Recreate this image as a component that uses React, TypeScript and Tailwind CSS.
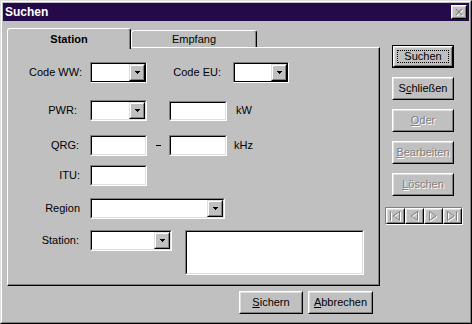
import type { ReactNode } from "react";

function Raised({ className = "", children }: { className?: string; children?: ReactNode }) {
  return (
    <div className={`border border-t-white border-l-white border-r-black border-b-black bg-[#c0c0c0] ${className}`}>
      <div className="w-full h-full border border-t-[#dfdfdf] border-l-[#dfdfdf] border-r-[#808080] border-b-[#808080] flex items-center justify-center">
        {children}
      </div>
    </div>
  );
}

function Sunken({
  className = "",
  inner = "border-t-black border-l-black border-r-[#dfdfdf] border-b-[#dfdfdf]",
  children,
}: {
  className?: string;
  inner?: string;
  children?: ReactNode;
}) {
  return (
    <div className={`border border-t-[#808080] border-l-[#808080] border-r-white border-b-white ${className}`}>
      <div className={`w-full h-full border bg-white flex justify-end ${inner}`}>{children}</div>
    </div>
  );
}

function Arrow() {
  return (
    <div className="w-[16px] h-full border border-t-[#dfdfdf] border-l-[#dfdfdf] border-r-black border-b-black bg-[#c0c0c0]">
      <div className="w-full h-full border border-t-white border-l-white border-r-[#808080] border-b-[#808080] flex items-center justify-center">
        <svg width="5" height="3" viewBox="0 0 5 3" shapeRendering="crispEdges">
          <path d="M0 0h5v1H0z M1 1h3v1H1z M2 2h1v1H2z" fill="#000" />
        </svg>
      </div>
    </div>
  );
}

function Combo({ className = "", focus = false }: { className?: string; focus?: boolean }) {
  return (
    <Sunken className={className} inner={focus ? "border-black" : undefined}>
      <Arrow />
    </Sunken>
  );
}

function Label({ className = "", children }: { className?: string; children: ReactNode }) {
  return <div className={`w-[82px] text-right ${className}`}>{children}</div>;
}

function Btn({
  children,
  disabled = false,
  isDefault = false,
  className = "w-[62px] h-[23px]",
}: {
  children: ReactNode;
  disabled?: boolean;
  isDefault?: boolean;
  className?: string;
}) {
  const text = disabled ? "text-[#808080] [text-shadow:1px_1px_0_#fff]" : "text-black";
  if (isDefault) {
    return (
      <div className={`border border-black ${className}`}>
        <Raised className="w-full h-full">
          <div className="w-[calc(100%-4px)] h-[calc(100%-4px)] border border-dotted border-black flex items-center justify-center">
            <span className={text}>{children}</span>
          </div>
        </Raised>
      </div>
    );
  }
  return (
    <Raised className={className}>
      <span className={text}>{children}</span>
    </Raised>
  );
}

function NavIcon({ kind }: { kind: "first" | "prev" | "next" | "last" }) {
  const paths: Record<string, string> = {
    first: "M1.5 1.5v9 M10.5 1.5 L4 6 L10.5 10.5 Z",
    prev: "M9.5 1.5 L3 6 L9.5 10.5 Z",
    next: "M2.5 1.5 L9 6 L2.5 10.5 Z",
    last: "M10.5 1.5v9 M1.5 1.5 L8 6 L1.5 10.5 Z",
  };
  return (
    <svg width="13" height="13" viewBox="0 0 13 13">
      <path d={paths[kind]} transform="translate(1 1)" fill="none" stroke="#fff" strokeWidth="1" />
      <path d={paths[kind]} fill="none" stroke="#808080" strokeWidth="1" />
    </svg>
  );
}

export default function App() {
  return (
    <div className="w-[472px] h-[324px] bg-[#c0c0c0] font-['Liberation_Sans',Arial,sans-serif] text-[11px] text-black border border-t-[#dfdfdf] border-l-[#dfdfdf] border-r-black border-b-black">
      <div className="w-full h-full border border-t-white border-l-white border-r-[#808080] border-b-[#808080] p-px flex flex-col">
        {/* title bar */}
        <div className="h-[18px] bg-[#240a48] flex items-center justify-between pl-[2px] pr-[2px]">
          <span className="text-white font-bold text-[12px]">Suchen</span>
          <Raised className="w-[16px] h-[14px]">
            <svg width="8" height="7" viewBox="0 0 9 8">
              <path d="M1 0l7 7M8 0L1 7" transform="translate(1 1)" stroke="#fff" strokeWidth="1.4" />
              <path d="M1 0l7 7M8 0L1 7" stroke="#808080" strokeWidth="1.4" />
            </svg>
          </Raised>
        </div>

        <div className="flex flex-1">
          {/* left: tabs + panel */}
          <div className="w-[377px] pl-[4px] pt-[7px] flex flex-col">
            <div className="h-[19px] flex items-end">
              <div className="relative z-10 -mb-[2px] w-[124px] h-[21px] border-l border-t border-r border-l-white border-t-white border-r-black rounded-t-[3px] bg-[#c0c0c0] shadow-[inset_-1px_0_0_#808080] flex items-center justify-center font-bold">
                Station
              </div>
              <div className="w-[126px] h-[17px] border-l border-t border-r border-l-white border-t-white border-r-black rounded-t-[3px] shadow-[inset_-1px_0_0_#808080] flex items-center justify-center">
                Empfang
              </div>
            </div>
            <div className="w-[373px] h-[239px] border border-t-white border-l-white border-r-black border-b-black shadow-[inset_-1px_-1px_0_#808080] flex flex-col">
              <div className="flex items-center h-[21px] mt-[14px]">
                <Label className="pr-[8px]">Code WW:</Label>
                <Combo className="w-[57px] h-[21px]" focus />
                <div className="w-[74px] text-right">Code EU:</div>
                <Combo className="w-[56px] h-[21px] ml-[12px]" focus />
              </div>
              <div className="flex items-center h-[21px] mt-[17px]">
                <Label className="pr-[13px]">PWR:</Label>
                <Combo className="w-[57px] h-[21px]" />
                <Sunken className="w-[58px] h-[20px] ml-[22px]" />
                <span className="ml-[9px]">kW</span>
              </div>
              <div className="flex items-center h-[21px] mt-[14px]">
                <Label className="pr-[11px]">QRG:</Label>
                <Sunken className="w-[57px] h-[21px]" />
                <div className="w-[22px] flex justify-center">
                  <div className="w-[5px] h-px bg-black ml-[1px]" />
                </div>
                <Sunken className="w-[58px] h-[21px]" />
                <span className="ml-[7px]">kHz</span>
              </div>
              <div className="flex items-center h-[21px] mt-[9px]">
                <Label className="pr-[10px]">ITU:</Label>
                <Sunken className="w-[57px] h-[21px]" />
              </div>
              <div className="flex items-center h-[21px] mt-[12px]">
                <Label className="pr-[10px]">Region</Label>
                <Combo className="w-[135px] h-[21px]" />
              </div>
              <div className="flex items-start mt-[11px]">
                <div className="h-[21px] flex items-center">
                  <Label className="pr-[11px]">Station:</Label>
                  <Combo className="w-[82px] h-[21px]" />
                </div>
                <Sunken className="w-[179px] h-[45px] ml-[13px]" />
              </div>
            </div>
            <div className="flex justify-end gap-[5px] mt-[5px] pr-[7px]">
              <Btn className="w-[64px] h-[23px]">
                <span className="underline">S</span>ichern
              </Btn>
              <Btn className="w-[65px] h-[23px]">
                <span className="underline">A</span>bbrechen
              </Btn>
            </div>
          </div>

          {/* right: buttons */}
          <div className="flex flex-col pt-[24px] pl-[12px] gap-[9px]">
            <Btn isDefault>Suchen</Btn>
            <Btn>
              S<span className="underline">c</span>hließen
            </Btn>
            <Btn disabled>
              <span className="underline">O</span>der
            </Btn>
            <Btn disabled>
              <span className="underline">B</span>earbeiten
            </Btn>
            <Btn disabled>
              <span className="underline">L</span>öschen
            </Btn>
            <div className="-ml-[7px] mt-[2px] w-[78px] h-[18px] border border-t-[#808080] border-l-[#808080] border-r-white border-b-white flex">
              {(["first", "prev", "next", "last"] as const).map((k) => (
                <Raised key={k} className="flex-1 h-full">
                  <NavIcon kind={k} />
                </Raised>
              ))}
            </div>
          </div>
        </div>
      </div>
    </div>
  );
}
